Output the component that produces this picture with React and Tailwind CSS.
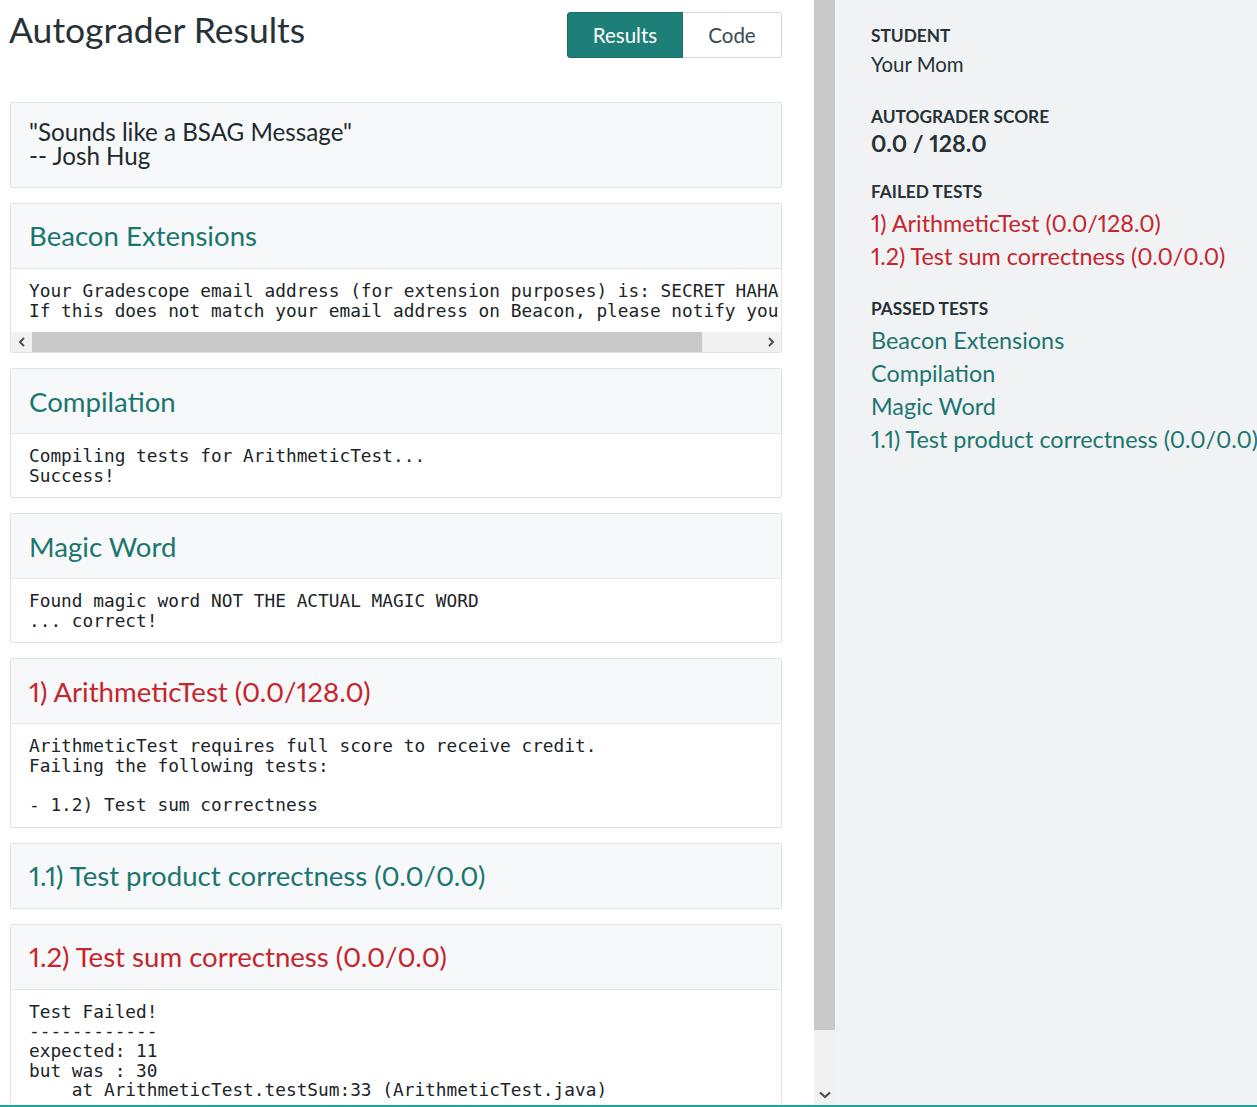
import React from "react";

const SANS = { fontFamily: "Lato, 'Open Sans', sans-serif" };
const MONO = { fontFamily: "'DejaVu Sans Mono', 'Liberation Mono', monospace" };

function Card({ title, color = "teal", children, scroll }) {
  const c = color === "red" ? "text-[#c4262e]" : "text-[#1c7670]";
  return (
    <div className="border border-[#dfe2e8] rounded-[2px] bg-white overflow-hidden">
      <div className={`flex items-center px-[18px] bg-[#f7f8fa] text-[27.6px] ${c} ${children ? "h-[65px] border-b border-[#e3e5ea]" : "h-[64px]"}`}>
        {title}
      </div>
      {children && (
        <div>
          <pre
            className={`px-[18px] pt-[12px] ${scroll ? "pb-[12px]" : "pb-[11.5px]"} text-[17.8px] leading-[19.7px] text-[#1b2427] whitespace-pre overflow-hidden`}
            style={MONO}
          >
            {children}
          </pre>
          {scroll && (
            <div className="h-[20px] bg-[#f1f1f1] flex items-center">
              <div className="w-[21px] flex justify-center">
                <svg width="8" height="10" viewBox="0 0 8 10"><path d="M6 1 L2 5 L6 9" fill="none" stroke="#505050" strokeWidth="2" /></svg>
              </div>
              <div className="w-[670px] h-[20px] bg-[#c9c9c9]" />
              <div className="flex-1" />
              <div className="w-[21px] flex justify-center">
                <svg width="8" height="10" viewBox="0 0 8 10"><path d="M2 1 L6 5 L2 9" fill="none" stroke="#505050" strokeWidth="2" /></svg>
              </div>
            </div>
          )}
        </div>
      )}
    </div>
  );
}

function Label({ children, className = "" }) {
  return (
    <div className={`text-[17.3px] leading-[20px] font-bold uppercase text-[#263236] ${className}`}>
      {children}
    </div>
  );
}

export default function App() {
  return (
    <div className="w-[1257px] h-[1107px] overflow-hidden bg-white proportional-nums" style={SANS}>
      <div className="flex h-[1105px]">
        {/* Left pane */}
        <div className="w-[814px] shrink-0 h-full overflow-hidden">
          <div className="ml-[10px] w-[772px]">
            <div className="flex justify-between items-start">
              <h1 className="mt-[10px] text-[35.5px] leading-[40px] text-[#263236] -ml-[1px]">Autograder Results</h1>
              <div className="mt-[12px] flex h-[46px] text-[20.5px]">
                <div className="w-[116px] flex items-center justify-center bg-[#1e7e78] border border-[#1b6d68] rounded-l-[3px] text-white">Results</div>
                <div className="w-[99px] flex items-center justify-center bg-white border border-l-0 border-[#d3d8df] rounded-r-[3px] text-[#3a4a50]">Code</div>
              </div>
            </div>

            <div className="mt-[44px] flex flex-col gap-[15px]">
              <div className="border border-[#dfe2e8] rounded-[2px] bg-[#f7f8fa] px-[18px] pt-[17px] pb-[19px] text-[24.2px] leading-[24px] text-[#1f2a2e]">
                <div>"Sounds like a BSAG Message"</div>
                <div>-- Josh Hug</div>
              </div>
              <Card title="Beacon Extensions" scroll>
{`Your Gradescope email address (for extension purposes) is: SECRET HAHA
If this does not match your email address on Beacon, please notify your TA.`}
              </Card>
              <Card title="Compilation">
{`Compiling tests for ArithmeticTest...
Success!`}
              </Card>
              <Card title="Magic Word">
{`Found magic word NOT THE ACTUAL MAGIC WORD
... correct!`}
              </Card>
              <Card title="1) ArithmeticTest (0.0/128.0)" color="red">
{`ArithmeticTest requires full score to receive credit.
Failing the following tests:

- 1.2) Test sum correctness`}
              </Card>
              <Card title="1.1) Test product correctness (0.0/0.0)" />
              <Card title="1.2) Test sum correctness (0.0/0.0)" color="red">
{`Test Failed!
------------
expected: 11
but was : 30
    at ArithmeticTest.testSum:33 (ArithmeticTest.java)`}
              </Card>
            </div>
          </div>
        </div>

        {/* Vertical scrollbar */}
        <div className="w-[21px] shrink-0 h-full bg-[#f1f1f1] flex flex-col">
          <div className="h-[1030px] bg-[#c9c9c9]" />
          <div className="flex-1" />
          <div className="h-[20px] flex items-center justify-center">
            <svg width="12" height="8" viewBox="0 0 12 8"><path d="M1 1.5 L6 6 L11 1.5" fill="none" stroke="#505050" strokeWidth="2.2" /></svg>
          </div>
        </div>

        {/* Sidebar */}
        <div className="flex-1 min-w-0 overflow-hidden h-full bg-[#f1f2f4] pl-[36px] pt-[26px] text-[#263236]">
          <Label>Student</Label>
          <div className="mt-[2px] text-[20.4px] leading-[33px]">Your Mom</div>

          <Label className="mt-[26px]">Autograder Score</Label>
          <div className="text-[23.2px] leading-[33px] font-bold">0.0 / 128.0</div>

          <Label className="mt-[22px]">Failed Tests</Label>
          <div className="mt-[5px] text-[23.4px] leading-[33px] text-[#c4262e] whitespace-nowrap">
            <div>1) ArithmeticTest (0.0/128.0)</div>
            <div>1.2) Test sum correctness (0.0/0.0)</div>
          </div>

          <Label className="mt-[26px]">Passed Tests</Label>
          <div className="mt-[5px] text-[23.4px] leading-[33px] text-[#1c7670] whitespace-nowrap">
            <div>Beacon Extensions</div>
            <div>Compilation</div>
            <div>Magic Word</div>
            <div>1.1) Test product correctness (0.0/0.0)</div>
          </div>
        </div>
      </div>
      <div className="h-[2px] bg-[#17a49b]" />
    </div>
  );
}
